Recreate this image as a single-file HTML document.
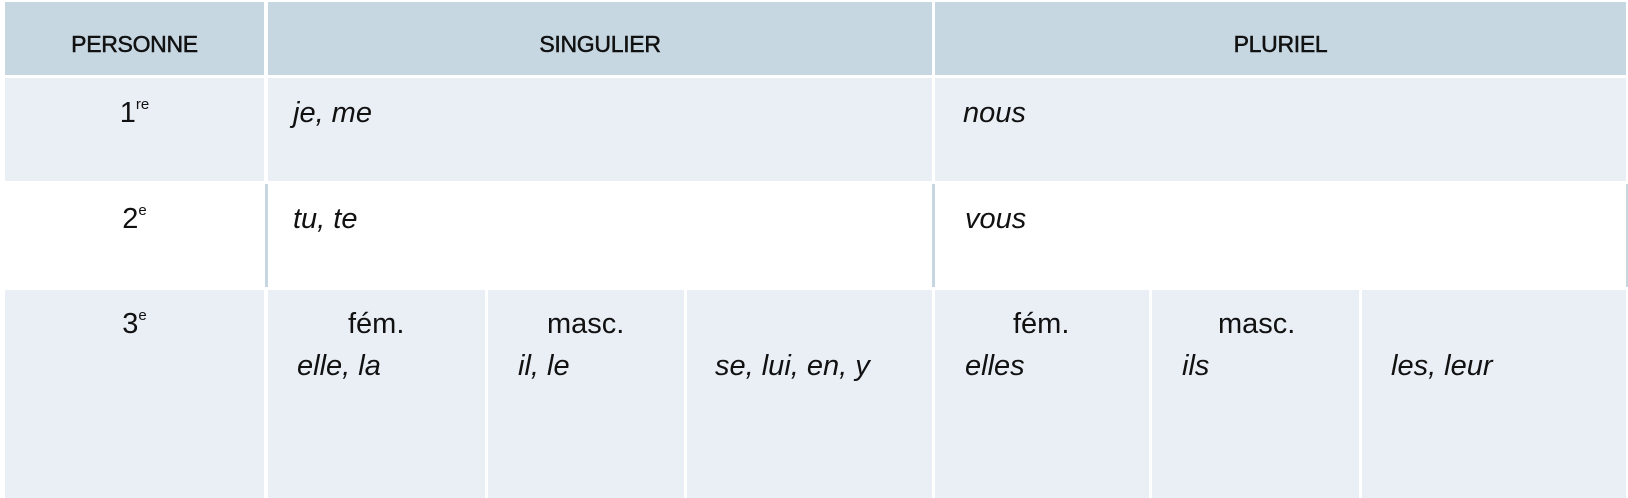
<!DOCTYPE html>
<html><head><meta charset="utf-8"><style>
html,body{margin:0;padding:0;background:#fff;width:1628px;height:498px;overflow:hidden;position:relative;font-family:"Liberation Sans",Arial,sans-serif;color:#111}
.b{position:absolute}
.h{background:#c6d7e2}
.l{background:#eaeff6}
.t{position:absolute;font-size:29px;white-space:nowrap;line-height:1}
.i{font-style:italic}
.hd{position:absolute;font-size:23px;font-weight:normal;-webkit-text-stroke:0.5px #111;top:33px;line-height:1;text-align:center;letter-spacing:-0.3px}
sup{font-size:15px;vertical-align:0;position:relative;top:-13px}
</style></head><body>
<div class="b h" style="left:5px;top:2px;width:259px;height:73px"></div>
<div class="b h" style="left:268px;top:2px;width:664px;height:73px"></div>
<div class="b h" style="left:935px;top:2px;width:691px;height:73px"></div>
<div class="hd" style="left:5px;width:259px">PERSONNE</div>
<div class="hd" style="left:268px;width:664px">SINGULIER</div>
<div class="hd" style="left:935px;width:691px">PLURIEL</div>
<div class="b l" style="left:5px;top:78px;width:259px;height:103px"></div>
<div class="b l" style="left:268px;top:78px;width:664px;height:103px"></div>
<div class="b l" style="left:935px;top:78px;width:691px;height:103px"></div>
<div class="b h" style="left:265px;top:184px;width:3px;height:103px"></div>
<div class="b h" style="left:932px;top:184px;width:3px;height:103px"></div>
<div class="b h" style="left:1626px;top:184px;width:2px;height:103px"></div>
<div class="b l" style="left:5px;top:290px;width:259px;height:208px"></div>
<div class="b l" style="left:268px;top:290px;width:217px;height:208px"></div>
<div class="b l" style="left:488px;top:290px;width:196px;height:208px"></div>
<div class="b l" style="left:687px;top:290px;width:245px;height:208px"></div>
<div class="b l" style="left:935px;top:290px;width:214px;height:208px"></div>
<div class="b l" style="left:1152px;top:290px;width:207px;height:208px"></div>
<div class="b l" style="left:1362px;top:290px;width:264px;height:208px"></div>

<div class="t" style="left:5px;width:259px;text-align:center;top:99px">1<sup>re</sup></div>
<div class="t i" style="left:293px;top:99px">je, me</div>
<div class="t i" style="left:963px;top:99px">nous</div>

<div class="t" style="left:5px;width:259px;text-align:center;top:205px">2<sup>e</sup></div>
<div class="t i" style="left:293px;top:205px">tu, te</div>
<div class="t i" style="left:965px;top:205px">vous</div>

<div class="t" style="left:5px;width:259px;text-align:center;top:310px">3<sup>e</sup></div>
<div class="t" style="left:348px;top:310px">fém.</div>
<div class="t i" style="left:297px;top:352px">elle, la</div>
<div class="t" style="left:547px;top:310px">masc.</div>
<div class="t i" style="left:518px;top:352px">il, le</div>
<div class="t i" style="left:715px;top:352px">se, lui, en, y</div>
<div class="t" style="left:1013px;top:310px">fém.</div>
<div class="t i" style="left:965px;top:352px">elles</div>
<div class="t" style="left:1218px;top:310px">masc.</div>
<div class="t i" style="left:1182px;top:352px">ils</div>
<div class="t i" style="left:1391px;top:352px">les, leur</div>
</body></html>
